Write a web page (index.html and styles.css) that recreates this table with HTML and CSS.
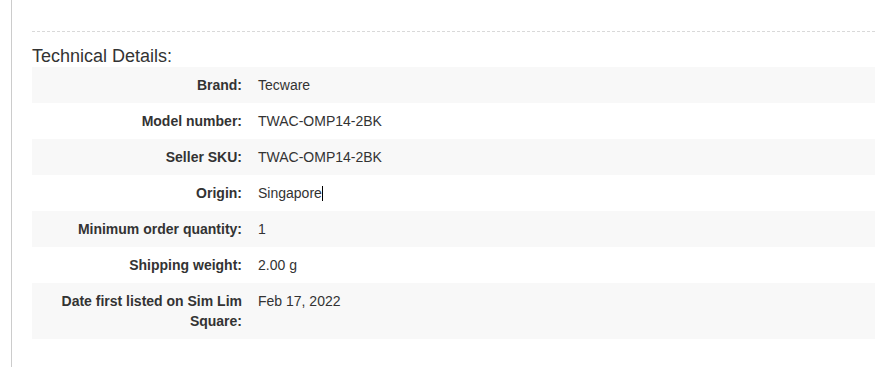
FILE: index.html
```html
<!DOCTYPE html>
<html>
<head>
<meta charset="utf-8">
<link rel="stylesheet" href="styles.css">
</head>
<body>
<div class="panel">
  <div class="divider"></div>
  <h4 class="title">Technical Details:</h4>
  <table class="details">
    <tr><th>Brand:</th><td>Tecware</td></tr>
    <tr><th>Model number:</th><td>TWAC-OMP14-2BK</td></tr>
    <tr><th>Seller SKU:</th><td>TWAC-OMP14-2BK</td></tr>
    <tr><th>Origin:</th><td>Singapore<span class="caret"></span></td></tr>
    <tr><th>Minimum order quantity:</th><td>1</td></tr>
    <tr><th>Shipping weight:</th><td>2.00 g</td></tr>
    <tr><th>Date first listed on Sim Lim Square:</th><td>Feb 17, 2022</td></tr>
  </table>
</div>
</body>
</html>
```
FILE: styles.css
```css
html, body {
  margin: 0;
  padding: 0;
  background: #fff;
}
body {
  font-family: "Liberation Sans", Arial, sans-serif;
  font-size: 14px;
  line-height: 20px;
  color: #333;
}
.panel {
  margin-left: 11px;
  border-left: 1px solid #ccc;
  padding: 31px 0 0 20px;
  height: 336px;
}
.divider {
  border-top: 1px dashed #d9d9d9;
  height: 0;
}
.title {
  margin: 14px 0 1px 0;
  font-size: 18px;
  font-weight: normal;
  line-height: 20px;
  color: #333;
}
.details {
  width: 100%;
  border-collapse: collapse;
  border-spacing: 0;
}
.details tr:nth-child(odd) {
  background: #f8f8f8;
}
.details th {
  width: 202px;
  padding: 8px;
  text-align: right;
  vertical-align: top;
  font-weight: bold;
  color: #333;
}
.details td {
  padding: 8px;
  text-align: left;
  vertical-align: top;
  color: #333;
}
.caret {
  display: inline-block;
  width: 1px;
  height: 15px;
  background: #000;
  vertical-align: -3px;
}
```
